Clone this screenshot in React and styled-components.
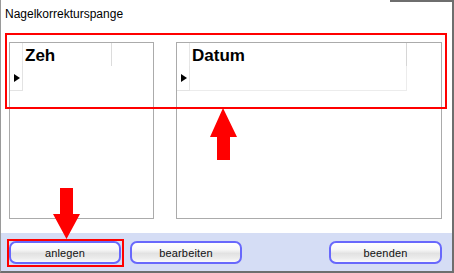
import React from "react";
import styled, { createGlobalStyle } from "styled-components";

const GlobalStyle = createGlobalStyle`
  html, body {
    margin: 0;
    padding: 0;
    background: #ffffff;
  }
  * {
    box-sizing: border-box;
  }
`;

const Window = styled.div`
  position: relative;
  width: 454px;
  height: 273px;
  display: flex;
  flex-direction: column;
  background: #ffffff;
  border-left: 1px solid #9a9a9a;
  border-right: 2px solid #6e6e6e;
  border-bottom: 2px solid #6e6e6e;
  font-family: "Liberation Sans", Arial, sans-serif;
  overflow: hidden;
`;

const TopEdge = styled.div`
  position: absolute;
  top: 0;
  right: 0;
  width: 62px;
  height: 2px;
  background: #6e6e6e;
`;

const Title = styled.div`
  height: 33px;
  padding: 8px 0 0 4px;
  font-size: 12px;
  color: #000000;
  line-height: 12px;
`;

const Main = styled.div`
  flex: 1;
  display: flex;
  gap: 22px;
  padding: 9px 0 0 8px;
`;

const Panel = styled.div`
  width: ${({ $width }) => $width}px;
  height: 177px;
  border: 1px solid #ababab;
  background: #ffffff;
`;

const Grid = styled.div`
  display: grid;
  grid-template-columns: 13px ${({ $col }) => $col}px;
  grid-template-rows: 23px 25px;
`;

const Corner = styled.div`
  border-right: 1px solid #e6e6e6;
`;

const HeaderCell = styled.div`
  position: relative;
  padding: 3px 0 0 2px;
  font-size: 17px;
  font-weight: bold;
  color: #000000;
  line-height: 20px;
  border-right: 1px solid ${({ $edge }) => ($edge ? "#dcdcdc" : "transparent")};

  &::after {
    content: "";
    position: absolute;
    right: -1px;
    top: 0;
    height: 23px;
    width: 1px;
    background: ${({ $divider }) => ($divider ? "#d6d6d6" : "transparent")};
  }
`;

const RowHeader = styled.div`
  display: flex;
  align-items: center;
  padding-left: 4px;
  border-right: 1px solid #e3e3e3;
  border-bottom: 1px solid #e3e3e3;
`;

const Pointer = styled.span`
  width: 0;
  height: 0;
  border-top: 4.5px solid transparent;
  border-bottom: 4.5px solid transparent;
  border-left: 6px solid #000000;
`;

const DataCell = styled.div`
  border-right: 1px solid ${({ $edge }) => ($edge ? "#ececec" : "transparent")};
  border-bottom: 1px solid ${({ $edge }) => ($edge ? "#ececec" : "transparent")};
`;

const Bar = styled.div`
  height: 38px;
  display: flex;
  align-items: flex-start;
  gap: 9px;
  padding: 8px 10px 0 8px;
  background: #d5ddf5;
`;

const Button = styled.button`
  width: ${({ $width }) => $width || 112}px;
  height: 23px;
  margin-left: ${({ $push }) => ($push ? "auto" : "0")};
  padding: 0;
  border: 2px solid #6868fc;
  border-radius: 7px;
  background: linear-gradient(
    to bottom,
    #ffffff 0%,
    #f7f7f7 35%,
    #e2e2e2 55%,
    #ececec 80%,
    #fafafa 100%
  );
  font-family: "Liberation Sans", Arial, sans-serif;
  font-size: 11px;
  letter-spacing: 0.15px;
  color: #111111;
`;

const Highlight = styled.div`
  position: absolute;
  left: ${({ $x }) => $x}px;
  top: ${({ $y }) => $y}px;
  width: ${({ $w }) => $w}px;
  height: ${({ $h }) => $h}px;
  border: 2px solid #ff0000;
  pointer-events: none;
`;

const ArrowSvg = styled.svg`
  position: absolute;
  left: ${({ $x }) => $x}px;
  top: ${({ $y }) => $y}px;
  pointer-events: none;
`;

const UpArrow = () => (
  <ArrowSvg $x={209} $y={108} width="28" height="53" viewBox="0 0 28 53">
    <polygon points="13,0 27,29 20,29 20,52 7,52 7,29 0,29" fill="#ff0000" />
  </ArrowSvg>
);

const DownArrow = () => (
  <ArrowSvg $x={52} $y={188} width="28" height="51" viewBox="0 0 28 51">
    <polygon points="7,0 20,0 20,26 27,26 13.5,51 0,26 7,26" fill="#ff0000" />
  </ArrowSvg>
);

const App = () => {
  return (
    <>
      <GlobalStyle />
      <Window>
        <TopEdge />
        <Title>Nagelkorrekturspange</Title>
        <Main>
          <Panel $width={145}>
            <Grid $col={89}>
              <Corner />
              <HeaderCell $edge>Zeh</HeaderCell>
              <RowHeader>
                <Pointer />
              </RowHeader>
              <DataCell />
            </Grid>
          </Panel>
          <Panel $width={266}>
            <Grid $col={217}>
              <Corner />
              <HeaderCell $edge $divider>Datum</HeaderCell>
              <RowHeader>
                <Pointer />
              </RowHeader>
              <DataCell $edge />
            </Grid>
          </Panel>
        </Main>
        <Bar>
          <Button>anlegen</Button>
          <Button>bearbeiten</Button>
          <Button $push $width={113}>
            beenden
          </Button>
        </Bar>
        <Highlight $x={4} $y={33} $w={442} $h={76} />
        <Highlight $x={6} $y={239} $w={117} $h={28} />
        <UpArrow />
        <DownArrow />
      </Window>
    </>
  );
};

export default App;
